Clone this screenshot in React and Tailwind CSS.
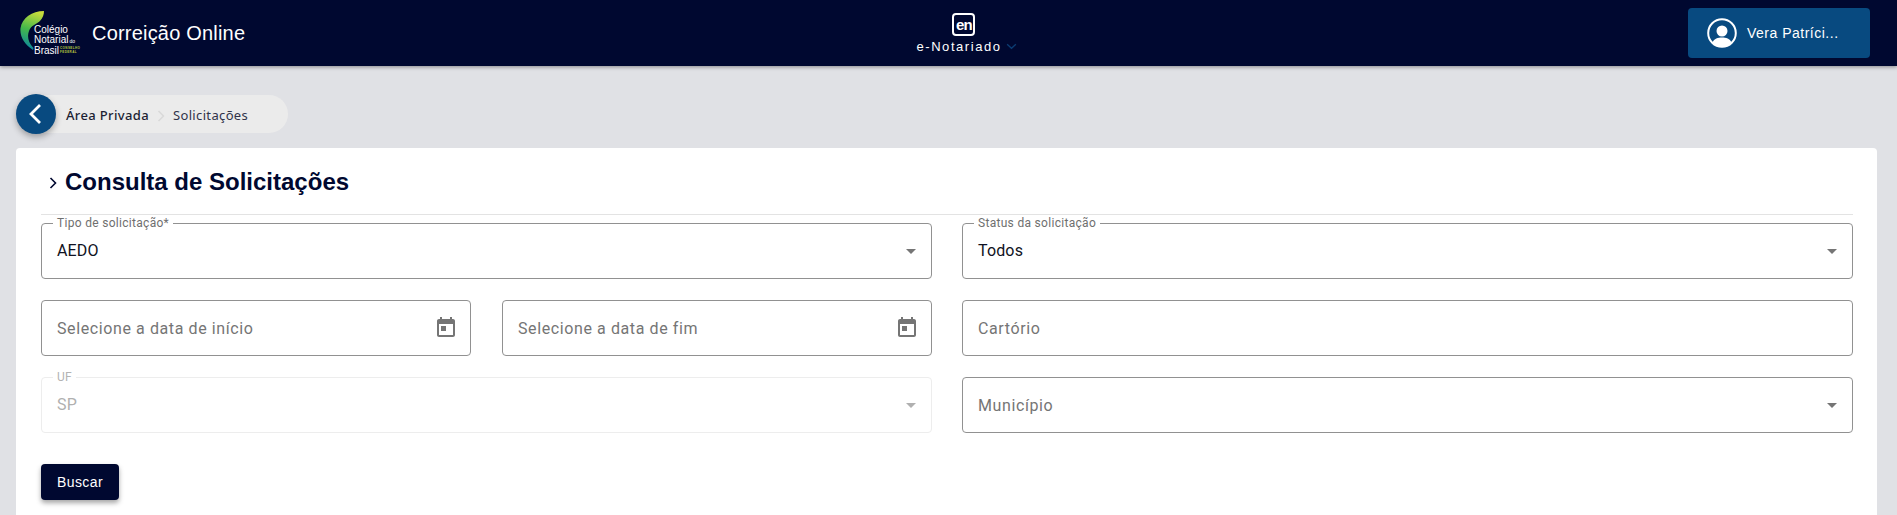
const TodayIcon = () => (
    <svg viewBox="0 0 24 24" className="w-6 h-6 fill-[#757575]">
        <path d="M19 3h-1V1h-2v2H8V1H6v2H5c-1.11 0-1.99.9-1.99 2L3 19c0 1.1.89 2 2 2h14c1.1 0 2-.9 2-2V5c0-1.1-.9-2-2-2zm0 16H5V8h14v11zM7 10h5v5H7z" />
    </svg>
);

const Caret = ({ disabled }) => (
    <span
        className={`block w-0 h-0 border-x-[5px] border-x-transparent border-t-[5px] ${disabled ? 'border-t-[#b0b0b0]' : 'border-t-[#757575]'}`}
    />
);

const Field = ({ label, value, placeholder, select, date, disabled }) => (
    <div
        className={`relative h-[56px] rounded-[4px] border bg-white pl-[15px] pr-[14px] flex items-center justify-between ${disabled ? 'border-[#ededed]' : 'border-[#919191]'}`}
    >
        {label && (
            <span
                className={`absolute left-[11px] -top-[7px] bg-white px-[4px] text-[12px] leading-[12px] font-['Roboto',sans-serif] tracking-[0.3px] ${disabled ? 'text-[#b3b3b3]' : 'text-[#6f6f6f]'}`}
            >
                {label}
            </span>
        )}
        {value && (
            <span className={`text-[16px] font-['Roboto',sans-serif] tracking-[0.15px] ${disabled ? 'text-[#b0b0b0]' : 'text-[#0f1222]'}`}>
                {value}
            </span>
        )}
        {placeholder && (
            <span className="pt-[1px] text-[16px] font-['Roboto',sans-serif] tracking-[0.6px] text-[#757575]">{placeholder}</span>
        )}
        {select && <span className="mr-[1px]"><Caret disabled={disabled} /></span>}
        {date && <span className="-mr-[2px]"><TodayIcon /></span>}
    </div>
);

const CnbLogo = () => (
    <div className="relative w-[70px] h-[46px]">
        <svg viewBox="0 0 70 46" className="absolute inset-0 w-[70px] h-[46px]">
            <defs>
                <linearGradient id="leaf" x1="0.6" y1="0" x2="0.4" y2="1">
                    <stop offset="0" stopColor="#c8dc3c" />
                    <stop offset="0.5" stopColor="#45b84a" />
                    <stop offset="1" stopColor="#0a86a0" />
                </linearGradient>
            </defs>
            <path
                d="M24 1C12 1 2 8 .5 18-.5 27 5 35 13 40l.5-2C8 32 7 26 9 21c2-6 8-7 11-10 3-3 4-7 4-10Z"
                fill="url(#leaf)"
            />
        </svg>
        <div className="absolute left-[14px] top-[15px] font-['Liberation_Sans',sans-serif] text-[10px] leading-[9.5px] text-white whitespace-nowrap">
            <div>Colégio</div>
            <div>Notarial<span className="text-[5px] ml-[1px]">do</span></div>
            <div className="flex items-center">
                Brasil
                <span className="ml-[1px] text-[3px] leading-[3.5px] tracking-[0.4px] text-[#b9c93e] font-bold">
                    <span className="block">CONSELHO</span>
                    <span className="block">FEDERAL</span>
                </span>
            </div>
        </div>
    </div>
);

const App = () => {
    return (
        <div className="h-[515px] overflow-hidden bg-[#e0e1e5] font-['Roboto',sans-serif]">
            <header className="relative h-[66px] bg-[#000830] shadow-[0_1px_4px_rgba(0,0,0,0.4)] flex items-center justify-between pl-[20px] pr-[27px]">
                <div className="flex items-center w-[240px]">
                    <CnbLogo />
                    <span className="ml-[2px] text-[20px] tracking-[0.2px] text-white font-['Liberation_Sans',sans-serif]">Correição Online</span>
                </div>
                <div className="flex flex-col items-center pt-[2px] -ml-[20px]">
                    <div className="w-[23px] h-[23px] rounded-[4px] border-2 border-white flex items-center justify-center">
                        <span className="text-[15px] leading-none font-bold text-white font-['Liberation_Sans',sans-serif] tracking-[-0.8px]">en</span>
                    </div>
                    <div className="flex items-center mt-[2px] ml-[6px]">
                        <span className="text-[13px] leading-[18px] tracking-[1.55px] text-white font-['Liberation_Sans',sans-serif]">e-Notariado</span>
                        <svg viewBox="0 0 12 8" className="w-[11px] h-[7px] ml-[5px] fill-none stroke-[#0b3d73] stroke-[1.5]">
                            <path d="M1 1.5 6 6l5-4.5" />
                        </svg>
                    </div>
                </div>
                <div className="w-[182px] h-[50px] rounded-[4px] bg-[#084a80] flex items-center pl-[19px]">
                    <svg viewBox="0 0 30 30" className="w-[30px] h-[30px]">
                        <circle cx="15" cy="15" r="13.8" fill="none" stroke="white" strokeWidth="2" />
                        <circle cx="15" cy="13" r="5.5" fill="white" />
                        <path d="M5.5 24.5C7 20.5 11 19.5 15 19.5s8 1 9.5 5C22 27.5 18.5 29 15 29s-7-1.5-9.5-4.5Z" fill="white" />
                    </svg>
                    <span className="ml-[10px] text-[14px] text-white font-['Liberation_Sans',sans-serif] tracking-[0.5px]">Vera Patríci...</span>
                </div>
            </header>

            <div className="pt-[28px] pl-[16px] pr-[20px]">
                <div className="flex items-center h-[40px]">
                    <div className="relative z-10 w-[40px] h-[40px] rounded-full bg-[#084a80] shadow-[0_3px_6px_rgba(0,0,0,0.3)] flex items-center justify-center">
                        <svg viewBox="0 0 14 20" className="w-[14px] h-[20px] fill-none stroke-white stroke-[2.8] -ml-[2px]">
                            <path d="M12 1 3 10l9 9" />
                        </svg>
                    </div>
                    <div className="-ml-[12px] h-[38px] w-[244px] rounded-r-[19px] bg-[#ebebeb] flex items-center pl-[22px] pt-[3px] font-['Noto_Sans',sans-serif] text-[13px]">
                        <span className="text-[#1c1f33] font-medium tracking-[0.35px]">Área Privada</span>
                        <svg viewBox="0 0 8 12" className="w-[8px] h-[12px] mx-[8px] fill-none stroke-[#d9d9d9] stroke-[1.5]">
                            <path d="M1.5 1 6.5 6l-5 5" />
                        </svg>
                        <span className="text-[#30334a] tracking-[0.35px]">Solicitações</span>
                    </div>
                </div>

                <main className="mt-[14px] bg-white rounded-[4px] pl-[25px] pr-[24px] h-[400px]">
                    <div className="h-[67px] pt-[2px] flex items-center border-b border-[#e3e3e3]">
                        <svg viewBox="0 0 8 12" className="w-[8px] h-[12px] ml-[8px] mr-[8px] mt-[2px] fill-none stroke-[#000830] stroke-[1.6]">
                            <path d="M1.5 1 6.5 6l-5 5" />
                        </svg>
                        <h1 className="text-[24px] font-bold text-[#000830] font-['Liberation_Sans',sans-serif]">Consulta de Solicitações</h1>
                    </div>

                    <div className="grid grid-cols-2 gap-x-[30px] gap-y-[21px] pt-[8px]">
                        <Field label="Tipo de solicitação*" value="AEDO" select />
                        <Field label="Status da solicitação" value="Todos" select />
                        <div className="grid grid-cols-2 gap-x-[31px]">
                            <Field placeholder="Selecione a data de início" date />
                            <Field placeholder="Selecione a data de fim" date />
                        </div>
                        <Field placeholder="Cartório" />
                        <Field label="UF" value="SP" select disabled />
                        <Field placeholder="Município" select />
                    </div>

                    <button className="mt-[31px] w-[78px] h-[36px] rounded-[4px] bg-[#000830] text-white text-[14px] font-['Liberation_Sans',sans-serif] tracking-[0.4px] shadow-[0_3px_5px_rgba(0,0,0,0.35)]">
                        Buscar
                    </button>
                </main>
            </div>
        </div>
    );
};

export default App;
